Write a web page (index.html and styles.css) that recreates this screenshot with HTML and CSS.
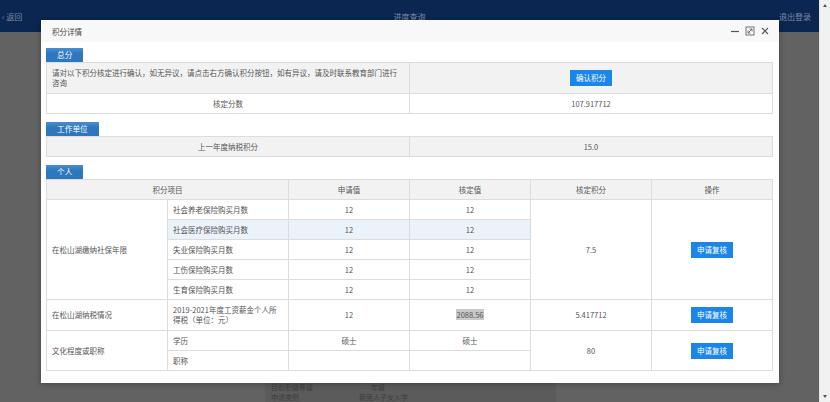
FILE: index.html
```html
<!DOCTYPE html>
<html lang="zh">
<head>
<meta charset="utf-8">
<title>积分详情</title>
<link rel="stylesheet" href="styles.css">
</head>
<body>
<div class="page">
  <div class="viewport">
    <div class="navbar">
      <span class="nav-back">‹ 返回</span>
      <span class="nav-title">进度查询</span>
      <span class="nav-logout">退出登录</span>
    </div>
    <div class="behind">
      <div class="behind-row"><span class="b-label">目前职级等级</span><span class="b-val">- - - 年级</span></div>
      <div class="behind-row"><span class="b-label">申请类别</span><span class="b-val">新莞人子女入学</span></div>
    </div>

    <div class="modal">
      <div class="modal-head">
        <span class="modal-title">积分详情</span>
        <div class="modal-tools">
          <svg class="tool" viewBox="0 0 10 10" width="10" height="10"><path d="M1 5.5H9" stroke="#555" stroke-width="1.2"/></svg>
          <svg class="tool" viewBox="0 0 10 10" width="10" height="10"><rect x="1" y="1" width="8" height="8" fill="none" stroke="#666" stroke-width="0.9"/><path d="M3 7L7 3M4.6 3H7V5.4M3 4.6V7H5.4" fill="none" stroke="#666" stroke-width="0.9"/></svg>
          <svg class="tool" viewBox="0 0 10 10" width="10" height="10"><path d="M2 2L8 8M8 2L2 8" stroke="#555" stroke-width="1.1"/></svg>
        </div>
      </div>
      <div class="modal-body">
        <div class="tab">总分</div>
        <table class="grid">
          <colgroup><col class="half"><col class="half"></colgroup>
          <tr class="gray tall">
            <td class="left">请对以下积分核定进行确认，如无异议，请点击右方确认积分按钮，如有异议，请及时联系教育部门进行<br>咨询</td>
            <td><span class="btn">确认积分</span></td>
          </tr>
          <tr>
            <td>核定分数</td>
            <td>107.917712</td>
          </tr>
        </table>

        <div class="tab">工作单位</div>
        <table class="grid">
          <colgroup><col class="half"><col class="half"></colgroup>
          <tr class="gray">
            <td>上一年度纳税积分</td>
            <td>15.0</td>
          </tr>
        </table>

        <div class="tab">个人</div>
        <table class="grid">
          <colgroup><col><col><col><col><col><col></colgroup>
          <tr class="gray">
            <td colspan="2">积分项目</td>
            <td>申请值</td>
            <td>核定值</td>
            <td>核定积分</td>
            <td>操作</td>
          </tr>
          <tr>
            <td rowspan="5" class="left">在松山湖缴纳社保年限</td>
            <td class="left">社会养老保险购买月数</td>
            <td>12</td>
            <td>12</td>
            <td rowspan="5">7.5</td>
            <td rowspan="5"><span class="btn">申请复核</span></td>
          </tr>
          <tr class="hover">
            <td class="left">社会医疗保险购买月数</td>
            <td>12</td>
            <td>12</td>
          </tr>
          <tr>
            <td class="left">失业保险购买月数</td>
            <td>12</td>
            <td>12</td>
          </tr>
          <tr>
            <td class="left">工伤保险购买月数</td>
            <td>12</td>
            <td>12</td>
          </tr>
          <tr>
            <td class="left">生育保险购买月数</td>
            <td>12</td>
            <td>12</td>
          </tr>
          <tr class="tall">
            <td class="left">在松山湖纳税情况</td>
            <td class="left">2019-2021年度工资薪金个人所<br>得税（单位：元）</td>
            <td>12</td>
            <td><span class="selected">2088.56</span></td>
            <td>5.417712</td>
            <td><span class="btn">申请复核</span></td>
          </tr>
          <tr>
            <td rowspan="2" class="left">文化程度或职称</td>
            <td class="left">学历</td>
            <td>硕士</td>
            <td>硕士</td>
            <td rowspan="2">80</td>
            <td rowspan="2"><span class="btn">申请复核</span></td>
          </tr>
          <tr>
            <td class="left">职称</td>
            <td></td>
            <td></td>
          </tr>
        </table>
      </div>
    </div>
  </div>
  <div class="scrollbar">
    <span class="arrow up"></span>
    <span class="arrow down"></span>
  </div>
</div>
</body>
</html>
```

FILE: styles.css
```css
* { box-sizing: border-box; }
html, body { margin: 0; padding: 0; }
body {
  font-family: "Noto Sans CJK SC", "Noto Sans", sans-serif;
  font-size: 7.5px;
  color: #555;
  overflow: hidden;
}
.page {
  display: flex;
  width: 830px;
  height: 402px;
}
.viewport {
  position: relative;
  flex: 1;
  background: #626262;
  display: flex;
  flex-direction: column;
}
.navbar {
  height: 32px;
  background: #0b2651;
  color: #7e8ba4;
  display: flex;
  align-items: center;
  justify-content: space-between;
  padding: 0 8px 0 2px;
  font-size: 8px;
  position: relative;
}
.nav-title {
  position: absolute;
  left: 50%;
  transform: translateX(-50%);
}
.behind {
  margin-top: auto;
  margin-left: 265px;
  width: 291px;
  background: #5b5b5b;
  color: #3e3e3e;
}
.behind-row {
  display: flex;
  height: 10px;
  line-height: 10px;
  align-items: center;
  font-size: 7px;
}
.b-label { width: 88px; padding-left: 6px; }
.b-val { padding-left: 6px; }

.modal {
  position: absolute;
  left: 41px;
  top: 20px;
  width: 738px;
  height: 363px;
  background: #fff;
  box-shadow: 0 1px 6px rgba(0,0,0,0.3);
  display: flex;
  flex-direction: column;
}
.modal-head {
  height: 22px;
  background: #f8f8f8;
  display: flex;
  align-items: center;
  justify-content: space-between;
  padding: 0 9px 0 11px;
  color: #444;
}
.modal-tools {
  display: flex;
  gap: 5px;
  align-items: center;
}
.tool { display: block; }
.modal-body {
  padding: 6px 5px 0 5px;
}
.tab {
  display: block;
  width: fit-content;
  height: 14px;
  line-height: 14px;
  padding: 0 11px;
  background: linear-gradient(#4a8fd0, #2c77bd 40%, #2c77bd);
  color: #fff;
  font-size: 7.7px;
}
.grid {
  width: 727px;
  border-collapse: collapse;
  table-layout: fixed;
  margin-bottom: 8px;
}
.grid td {
  border: 1px solid #dcdcdc;
  text-align: center;
  vertical-align: middle;
  height: 20px;
  padding: 0 5px;
  line-height: 10px;
}
.grid td.left { text-align: left; }
.grid tr.gray td { background: #f2f2f2; }
.grid tr.tall td { height: 31px; }
.grid tr.hover td { background: #eaf2fa; }
.half { width: 50%; }
.btn {
  display: inline-block;
  height: 16px;
  line-height: 16px;
  padding: 0 6px;
  background: #1c86e8;
  color: #fff;
  vertical-align: middle;
}
.selected {
  background: #c9c9c9;
  color: #555;
}
.scrollbar {
  width: 11px;
  background: #f1f1f1;
  position: relative;
  border-left: 1px solid #e6e6e6;
}
.arrow {
  position: absolute;
  left: 3px;
  width: 0;
  height: 0;
  border-left: 2.5px solid transparent;
  border-right: 2.5px solid transparent;
}
.arrow.up { top: 4px; border-bottom: 3px solid #555; }
.arrow.down { bottom: 4px; border-top: 3px solid #555; }
```
